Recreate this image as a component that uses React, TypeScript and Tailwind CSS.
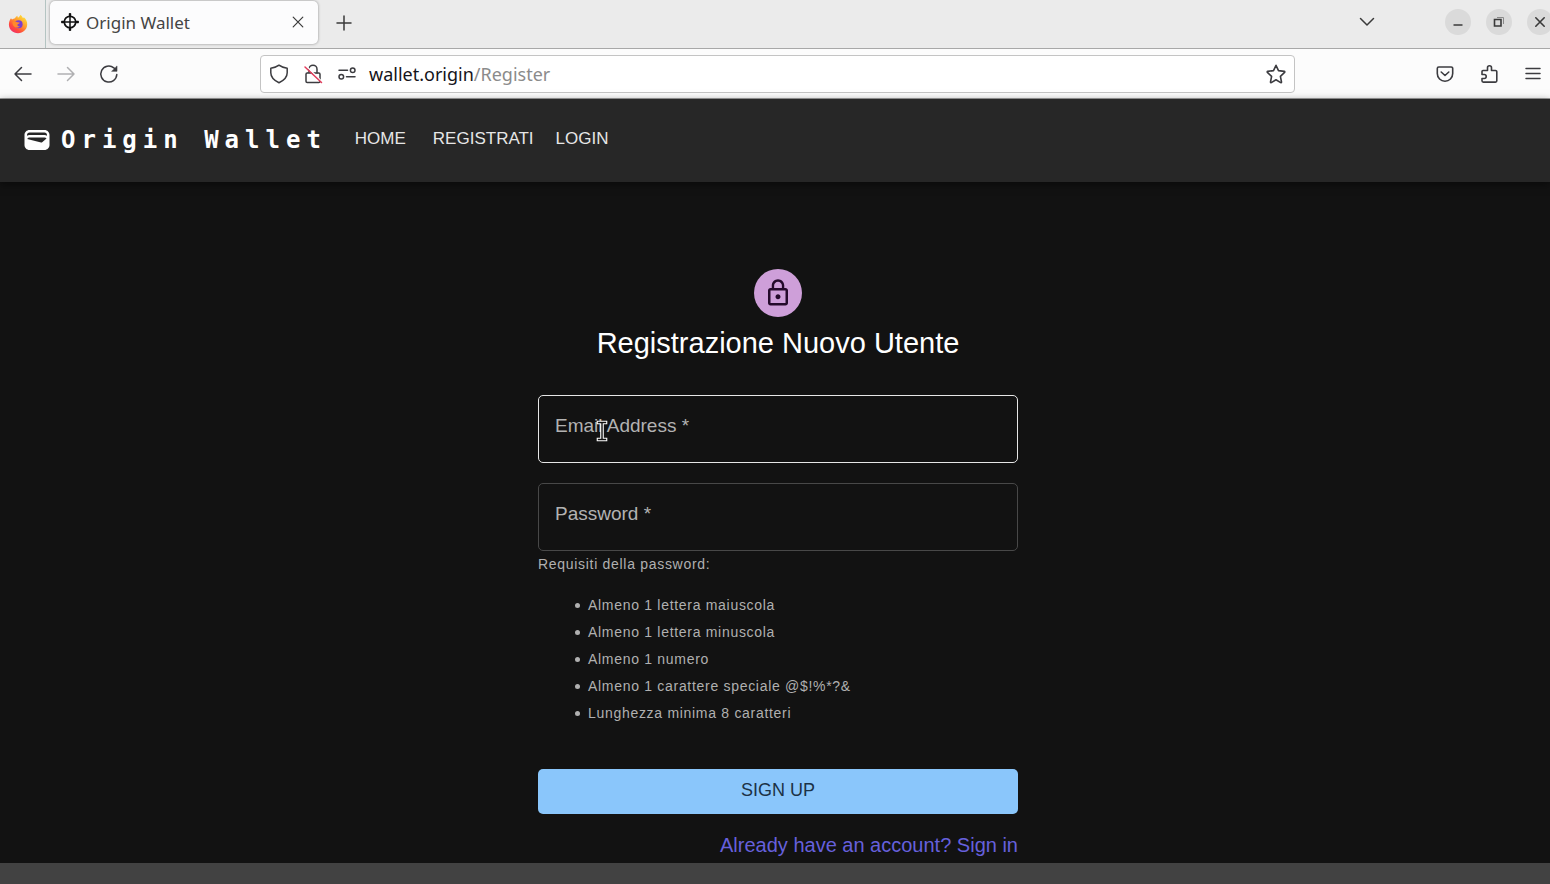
import type { ReactNode } from "react";

const requirements = [
  "Almeno 1 lettera maiuscola",
  "Almeno 1 lettera minuscola",
  "Almeno 1 numero",
  "Almeno 1 carattere speciale @$!%*?&",
  "Lunghezza minima 8 caratteri",
];

const navLinks = [
  { label: "HOME", className: "mr-[27px]" },
  { label: "REGISTRATI", className: "mr-[22px]" },
  { label: "LOGIN", className: "" },
];

function Line({ className = "size-5", width = 1.5, children }: { className?: string; width?: number; children: ReactNode }) {
  return (
    <svg
      viewBox="0 0 20 20"
      className={`shrink-0 ${className}`}
      fill="none"
      stroke="currentColor"
      strokeWidth={width}
      strokeLinecap="round"
      strokeLinejoin="round"
      aria-hidden="true"
    >
      {children}
    </svg>
  );
}

function FirefoxLogo() {
  return (
    <svg viewBox="0 0 20 20" className="size-5 shrink-0" aria-hidden="true">
      <defs>
        <linearGradient id="fox" x1="0.85" y1="0.1" x2="0.2" y2="0.95">
          <stop offset="0" stopColor="#ffe03a" />
          <stop offset="0.4" stopColor="#ff9a2e" />
          <stop offset="0.75" stopColor="#ff4a3d" />
          <stop offset="1" stopColor="#f0306a" />
        </linearGradient>
      </defs>
      <path
        d="M3 4.2c.5.5.8.9 1 1.3C5 4.7 6 4.3 7 4.2 7.5 3.2 8.4 2.2 9.5 1.8c-.2.8 0 1.5.5 2C11.5 3 12 1.800 12.4.8c1.2.9 2 2 2.5 3.2.5-.1.8-.4 1-.8C18 5 19.4 7.5 19.2 10.7 18.9 15.6 15 19.2 10 19.2S.9 15.4.9 10.5C.9 8 1.800 5.9 3 4.2Z"
        fill="url(#fox)"
      />
      <circle cx="10.6" cy="10.2" r="4" fill="#7a3fd0" />
      <path d="M4.5 8c1.800-.9 3.600-.6 4.900.3 1 .1 2 .1 2.400.5-.3.900-1.500 1.200-2.300 1.600-.4 1.300.7 2.200 2.300 1.800-1 1.700-4.400 2-6 .1C4.800 11 4.400 9.600 4.500 8Z" fill="#ff8a2b" />
    </svg>
  );
}

function CrosshairIcon() {
  return (
    <svg viewBox="0 0 18 18" className="size-[18px] shrink-0" fill="none" stroke="#111" aria-hidden="true">
      <circle cx="9" cy="9" r="5.7" strokeWidth="1.7" />
      <path d="M9 0v18M0 9h18" strokeWidth="1.5" />
      <path d="M9 0.500v3.500M9 14v3.500M.5 9H4M14 9h3.500" strokeWidth="2.4" />
    </svg>
  );
}

function WindowButton({ label, children }: { label: string; children: ReactNode }) {
  return (
    <button type="button" aria-label={label} className="flex size-[26px] shrink-0 items-center justify-center rounded-full bg-[#dadada] text-[#3a3a3a]">
      {children}
    </button>
  );
}

function TabStrip() {
  return (
    <div className="flex h-[49px] items-center overflow-hidden border-b border-[#a8a8a8] bg-[#ebebeb] pb-1 text-[#3a3a3a]">
      <div className="-mb-1 flex h-[48px] w-[46px] shrink-0 items-center border-r border-[#b4c4c2] pl-2">
        <FirefoxLogo />
      </div>
      <div className="ml-1 flex h-[43px] w-[268px] shrink-0 items-center rounded-[5px] bg-[#fcfcfd] pl-[11px] pr-3 shadow-[0_0_3px_rgba(0,0,0,0.4)]">
        <CrosshairIcon />
        <span className="ml-[7px] flex-1 pt-0.5 font-['Noto_Sans','Open_Sans',sans-serif] text-[17px] leading-6 text-[#444]">Origin Wallet</span>
        <button type="button" aria-label="Close tab" className="flex">
          <Line className="size-4" width={1.5}>
            <path d="M4 4l12 12M16 4L4 16" />
          </Line>
        </button>
      </div>
      <button type="button" aria-label="New tab" className="ml-4 flex pt-0.5">
        <Line>
          <path d="M10 3v14M3 10h14" />
        </Line>
      </button>
      <div className="ml-auto flex shrink-0 items-center">
        <button type="button" aria-label="List all tabs" className="mr-[68px] flex">
          <Line>
            <path d="M3.500 6.500L10 13l6.500-6.500" />
          </Line>
        </button>
        <div className="-mr-[3px] flex gap-[15px]">
          <WindowButton label="Minimize">
            <Line className="size-5">
              <path d="M5.500 13h9" strokeLinecap="butt" strokeWidth="1.500" />
            </Line>
          </WindowButton>
          <WindowButton label="Restore">
            <Line className="size-5">
              <path d="M5.500 7.500h6.500v6.500h-6.500z" strokeLinejoin="miter" strokeWidth="1.600" />
              <path d="M8 5.500h6.500V12" strokeWidth="1" stroke="#8a8a8a" strokeLinecap="butt" />
            </Line>
          </WindowButton>
          <WindowButton label="Close window">
            <Line className="size-5" width={1.6}>
              <path d="M5.800 5.800l8.400 8.400M14.200 5.800l-8.400 8.400" />
            </Line>
          </WindowButton>
        </div>
      </div>
    </div>
  );
}

function Toolbar() {
  return (
    <div className="flex h-[50px] items-center border-b border-[#a0a0a0] bg-[#fcfcfc] text-[#3c3c40]">
      <div className="flex w-[260px] shrink-0 items-center gap-[23px] pl-[13px]">
        <button type="button" aria-label="Back" className="flex">
          <Line>
            <path d="M18 10H2M8.500 3.500L2 10l6.500 6.500" />
          </Line>
        </button>
        <button type="button" aria-label="Forward" className="flex text-[#b0b0b2]">
          <Line>
            <path d="M2 10h16M11.500 3.500L18 10l-6.500 6.500" />
          </Line>
        </button>
        <button type="button" aria-label="Reload" className="flex">
          <Line>
            <path d="M17.800 10.500a8 8 0 1 1-3-6.700l2.400 2.400" />
            <path d="M18 2.300v5h-5z" fill="currentColor" strokeWidth=".6" />
          </Line>
        </button>
      </div>
      <div className="flex h-[38px] min-w-0 flex-1 items-center rounded-[4px] border border-[#c4c4c4] bg-white pl-2 pr-2">
        <Line>
          <path d="M10 1.200c2.300 1.800 4.800 2.600 8.200 3v4.600c0 4.300-4 8-8.200 10-4.200-2-8.200-5.700-8.200-10V4.200c3.400-.4 5.900-1.200 8.200-3Z" />
        </Line>
        <div className="ml-[14px] flex">
          <Line>
            <path d="M4.500 9h11.300a1.200 1.200 0 0 1 1.200 1.200v7.100a1.200 1.200 0 0 1-1.200 1.200H4.200A1.200 1.200 0 0 1 3 17.300v-7.100A1.200 1.200 0 0 1 4.200 9" />
            <path d="M6 8.500V5.200a4 4 0 0 1 8 0V9" />
            <path d="M3.500 2.200l15 15" stroke="#fff" strokeWidth="1.500" />
            <path d="M2 3l16.500 15.500" stroke="#e23b5a" />
          </Line>
        </div>
        <div className="ml-[14px] flex">
          <Line>
            <circle cx="15.700" cy="6.300" r="2.300" />
            <circle cx="4.300" cy="12.800" r="2.300" />
            <path d="M2 6.300h8.500M9.500 12.800H18" />
          </Line>
        </div>
        <div
          role="textbox"
          aria-label="Address"
          className="ml-3 flex-1 whitespace-nowrap font-['Noto_Sans','Open_Sans',sans-serif] text-[18px] leading-6 text-[#8b8b8b]"
        >
          <span className="text-[#15141a]">wallet.origin</span>/Register
        </div>
        <button type="button" aria-label="Bookmark this page" className="flex">
          <Line width={1.6}>
            <path d="M10 1.300l2.500 5.300 5.800.8c.5.100.7.600.3 1l-4.200 4 1.100 5.600c.1.500-.4.800-.8.600L10 15.800l-4.700 2.800c-.4.200-.9-.1-.8-.6l1.100-5.600-4.200-4c-.4-.4-.2-.9.3-1l5.800-.8z" />
          </Line>
        </button>
      </div>
      <div className="flex w-[255px] shrink-0 items-center justify-end gap-6 pr-[7px]">
        <button type="button" aria-label="Save to Pocket" className="flex">
          <Line width={1.6}>
            <path d="M3.800 3h12.400A1.500 1.500 0 0 1 17.700 4.500v5a7.700 7.700 0 0 1-15.400 0v-5A1.500 1.500 0 0 1 3.800 3Z" />
            <path d="M6.200 8l3.800 3.500L13.800 8" />
          </Line>
        </button>
        <button type="button" aria-label="Extensions" className="flex">
          <Line width={1.6}>
            <path d="M4 6.500h4.500V3.800a2 2 0 0 1 4 0v2.700h4a1.300 1.300 0 0 1 1.300 1.300v9a1.300 1.300 0 0 1-1.300 1.300H4.300A1.300 1.300 0 0 1 3 16.800v-2.300h2.200a2 2 0 0 0 0-4H3V7.500a1 1 0 0 1 1-1Z" />
          </Line>
        </button>
        <button type="button" aria-label="Application menu" className="flex">
          <Line width={1.5}>
            <path d="M3 4.500h14M3 9.500h14M3 14.500h14" />
          </Line>
        </button>
      </div>
    </div>
  );
}

function AppHeader() {
  return (
    <header className="flex h-[83px] items-center bg-[#272727] pl-[22px] text-white shadow-[0_2px_8px_rgba(0,0,0,0.5)]">
      <a href="#home" className="flex items-center pb-0.5">
        <svg viewBox="0 0 24 24" className="size-[30px] shrink-0" fill="currentColor" aria-hidden="true">
          <path d="M18 4H6C3.790 4 2 5.790 2 8v8c0 2.210 1.790 4 4 4h12c2.210 0 4-1.790 4-4V8c0-2.210-1.790-4-4-4zm-1.860 9.770c-.24.2-.57.280-.88.2L4.150 11.250C4.450 10.520 5.160 10 6 10h12c.67 0 1.260.340 1.630.840l-3.490 2.930zM6 6h12c1.100 0 2 .9 2 2v.55c-.59-.34-1.270-.55-2-.55H6c-.73 0-1.410.210-2 .55V8c0-1.100.9-2 2-2z" />
        </svg>
        <span className="ml-[9px] whitespace-nowrap font-['DejaVu_Sans_Mono',monospace] text-2xl font-bold tracking-[6px]">Origin Wallet</span>
      </a>
      <nav className="ml-7 flex pb-1 text-[17px] leading-6 text-[#e6e6e6]">
        {navLinks.map((link) => (
          <a key={link.label} href={`#${link.label.toLowerCase()}`} className={link.className}>
            {link.label}
          </a>
        ))}
      </nav>
    </header>
  );
}

function Field({ id, label, type, border, children }: { id: string; label: string; type: string; border: string; children?: ReactNode }) {
  return (
    <div className="relative">
      <input
        id={id}
        type={type}
        required
        className={`block h-[68px] w-full rounded-[5px] border bg-transparent px-4 text-[19px] text-white outline-none ${border}`}
      />
      <label htmlFor={id} className="pointer-events-none absolute left-[17px] top-[17px] text-[19px] leading-7 text-[#b2b2b2]">
        {label} *
      </label>
      {children}
    </div>
  );
}

function TextCursor() {
  return (
    <svg viewBox="0 0 12 22" className="pointer-events-none absolute left-[58px] top-[25px] h-[22px] w-3" fill="none" aria-hidden="true">
      <path d="M2.500 2.500h7M2.500 19.500h7M6 2.500v17" stroke="#fff" strokeWidth="3.600" strokeLinecap="square" />
      <path d="M2.500 2.500h7M2.500 19.500h7M6 2.500v17" stroke="#111" strokeWidth="1.400" strokeLinecap="square" />
    </svg>
  );
}

export default function App() {
  return (
    <div className="flex min-h-screen flex-col bg-[#121212] font-['Liberation_Sans',Arial,sans-serif]">
      <TabStrip />
      <Toolbar />
      <AppHeader />
      <main className="flex flex-1 justify-center pl-1.5 pt-[87px]">
        <form className="flex w-full max-w-[480px] flex-col" onSubmit={(event) => event.preventDefault()}>
          <div className="flex size-12 items-center justify-center self-center rounded-full bg-[#ce9fd9] text-[#240a2b]">
            <svg viewBox="0 0 24 24" className="size-[30px]" fill="currentColor" aria-hidden="true">
              <path d="M12 17c1.100 0 2-.9 2-2s-.9-2-2-2-2 .9-2 2 .9 2 2 2zm6-9h-1V6c0-2.760-2.240-5-5-5S7 3.240 7 6v2H6c-1.100 0-2 .9-2 2v10c0 1.100.9 2 2 2h12c1.100 0 2-.9 2-2V10c0-1.100-.9-2-2-2zM8.900 6c0-1.710 1.390-3.100 3.100-3.100s3.100 1.390 3.100 3.100v2H8.900V6zM18 20H6V10h12v10z" />
            </svg>
          </div>
          <h1 className="mt-1.5 text-center text-[29px] leading-10 text-white">Registrazione Nuovo Utente</h1>
          <div className="mt-8 flex flex-col gap-5">
            <Field id="email" label="Email Address" type="email" border="border-[#e6e6e6]">
              <TextCursor />
            </Field>
            <Field id="password" label="Password" type="password" border="border-[#484848]" />
          </div>
          <div className="text-[14px] leading-[27px] tracking-wider text-[#b0b0b0]">
            <p>Requisiti della password:</p>
            <ul className="mt-[14px] pl-[37px]">
              {requirements.map((item) => (
                <li key={item} className="flex items-center gap-2">
                  <span className="size-[5px] shrink-0 rounded-full bg-[#b0b0b0]" aria-hidden="true" />
                  {item}
                </li>
              ))}
            </ul>
          </div>
          <button type="submit" className="mt-[42px] h-[45px] rounded-[5px] bg-[#8ac6fb] pb-1 text-[18px] leading-6 text-[#1c3246]">
            SIGN UP
          </button>
          <a href="#login" className="mt-4 self-end text-[20px] leading-[30px] text-[#6660dc]">
            Already have an account? Sign in
          </a>
        </form>
      </main>
      <footer className="h-[21px] bg-[#424242]" />
    </div>
  );
}
